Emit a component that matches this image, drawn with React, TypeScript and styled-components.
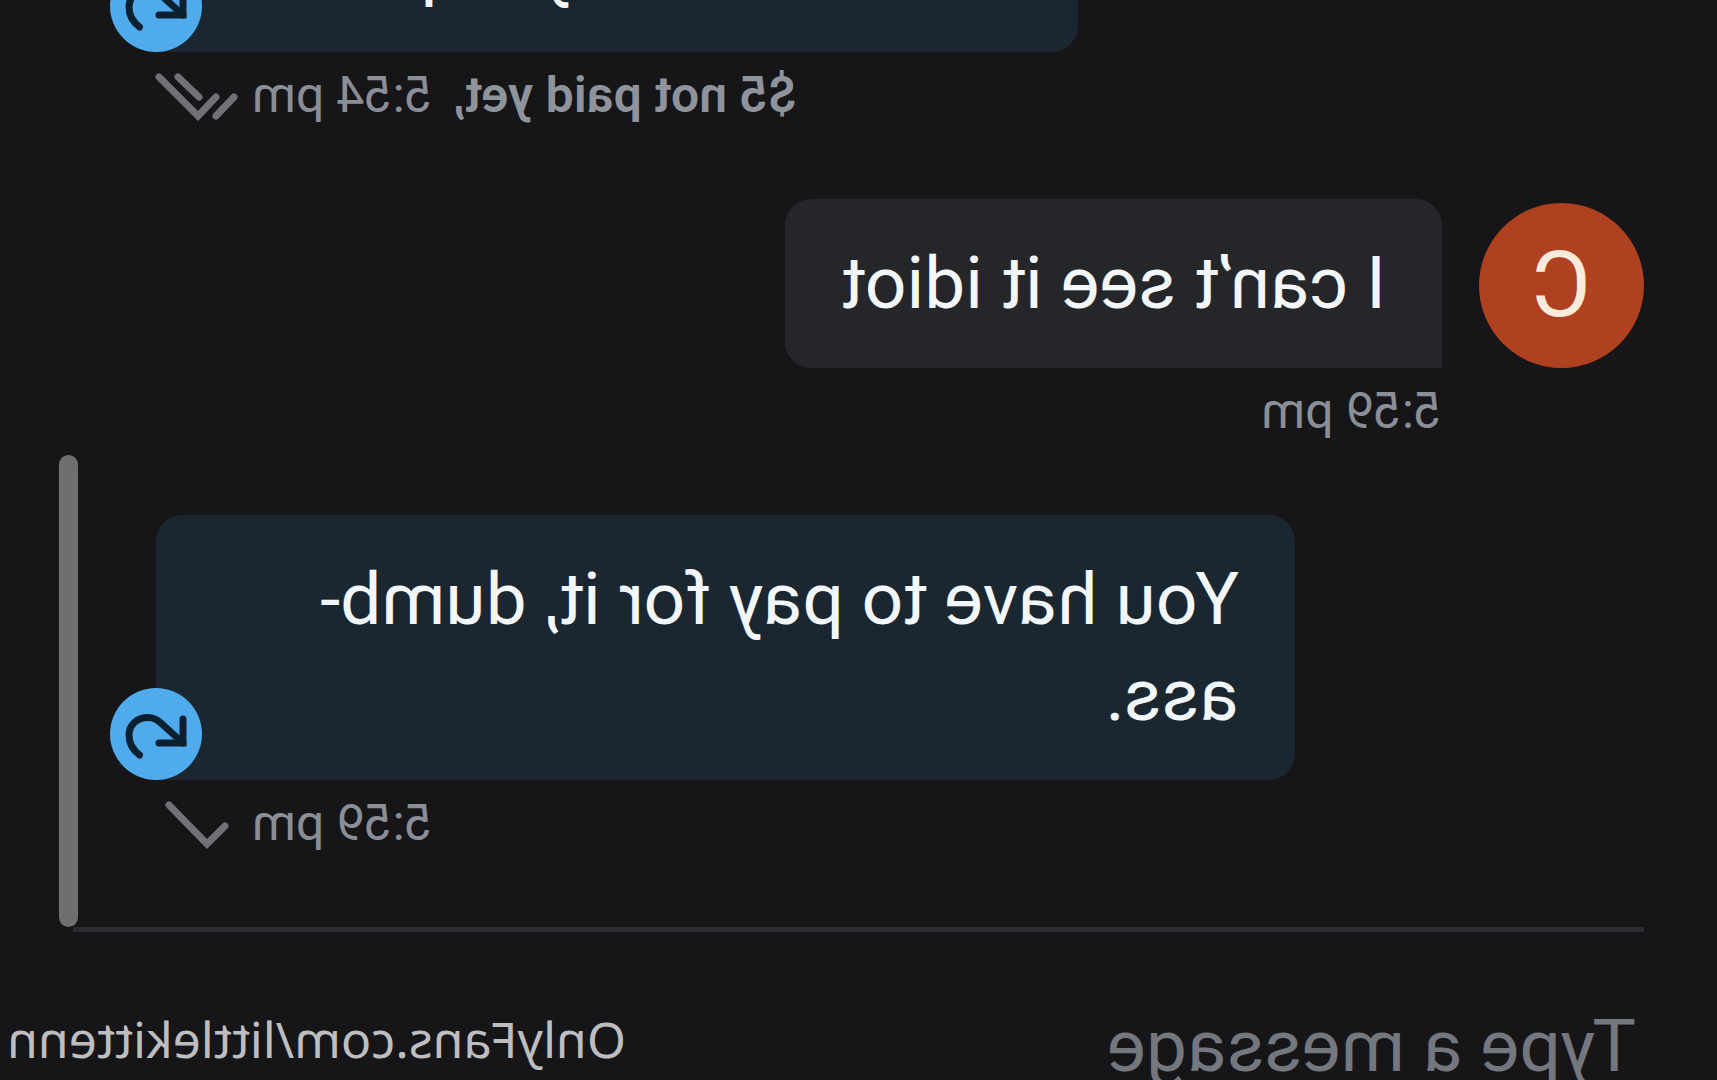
import React from "react";
import styled, { createGlobalStyle } from "styled-components";

const GlobalStyle = createGlobalStyle`
  * { box-sizing: border-box; }
  body { margin: 0; background: #161618; }
`;

/* The whole conversation is shown flipped left to right. */
const Page = styled.main`
  display: flex;
  flex-direction: column;
  height: 100vh;
  overflow: hidden;
  background: #161618;
  color: #f3f6fb;
  font-family: Roboto, "Liberation Sans", sans-serif;
  transform: scaleX(-1);
`;

const Thread = styled.section`
  position: relative;
  flex: 1 1 0;
  min-height: 0;
  display: flex;
  flex-direction: column;
  justify-content: flex-end;
  gap: 69px;
  padding: 0 156px 69px 73px;
`;

const ScrollThumb = styled.div`
  position: absolute;
  right: 59px;
  bottom: 0;
  width: 19px;
  height: 472px;
  border-radius: 10px;
  background: #6f6f6f;
`;

const Message = styled.article<{ $sent?: boolean }>`
  display: flex;
  flex: none;
  flex-direction: column;
  align-items: ${(p) => (p.$sent ? "flex-end" : "flex-start")};
  gap: 8px;
`;

const BubbleRow = styled.div`
  display: flex;
  align-items: flex-end;
  gap: 37px;
`;

const Avatar = styled.div`
  display: grid;
  place-items: center;
  width: 165px;
  height: 165px;
  border-radius: 50%;
  background: #b04120;
  color: #fdeadb;
  font-size: 90px;
`;

const Bubble = styled.div<{ $sent?: boolean }>`
  position: relative;
  max-width: 1139px;
  padding: 36px 56px 37px;
  border-radius: ${(p) => (p.$sent ? "26px 26px 0 26px" : "26px 26px 26px 0")};
  background: ${(p) => (p.$sent ? "#1a2730" : "#25262a")};
`;

const Text = styled.p`
  margin: 0;
  font-size: 73px;
  line-height: 96px;
`;

const Badge = styled.button`
  position: absolute;
  right: -46px;
  bottom: 0;
  width: 92px;
  height: 92px;
  padding: 0;
  border: 0;
  border-radius: 50%;
  background: #4fabeb;
  color: #0b2030;
`;

const Meta = styled.footer<{ $inset?: boolean }>`
  display: flex;
  align-items: center;
  gap: 16px;
  padding-left: ${(p) => (p.$inset ? "202px" : "0")};
  color: #8b8e96;
  font-size: 50px;
  line-height: 70px;
`;

const Unpaid = styled.strong`
  margin-right: 8px;
  font-weight: 600;
  color: #8f939c;
`;

const Icon = styled.svg`
  display: block;
  fill: none;
  stroke: currentColor;
  stroke-width: 7;
  stroke-linecap: round;
  overflow: visible;
`;

const TickIcon = styled(Icon)`
  color: #707278;
`;

const Composer = styled.form`
  position: relative;
  flex: 0 0 153px;
  min-height: 0;
  margin: 0 73px;
  padding: 66px 8px 0;
  border-top: 5px solid #2c2c31;
`;

const MessageInput = styled.input`
  display: block;
  width: 100%;
  height: 96px;
  padding: 0;
  border: 0;
  outline: 0;
  background: transparent;
  color: #f3f6fb;
  font: 73px/96px Roboto, "Liberation Sans", sans-serif;
  &::placeholder { color: #74777e; opacity: 1; }
`;

const ProfileLink = styled.a`
  position: absolute;
  right: -66px;
  bottom: 6px;
  color: #bebec0;
  font: 50px/70px "Noto Sans", "Open Sans", sans-serif;
  text-decoration: none;
`;

function ResendIcon() {
  return (
    <Icon width="92" height="92" viewBox="0 0 92 92" aria-hidden="true">
      <path d="M62.5 67C69 62 73 55 73 47C73 37 65 29.5 54 29.5C48 29.5 44 32 40 36L19 55" />
      <path d="M19 31V55H43" />
    </Icon>
  );
}

function Ticks({ read }: { read?: boolean }) {
  return (
    <TickIcon width="80" height="48" viewBox="0 0 80 48" aria-hidden="true">
      {read ? (
        <>
          <path d="M77 6L38 45L20 26" />
          <path d="M58 6L37 26M2 26L20 45" />
        </>
      ) : (
        <path d="M67 6L29 45L11 27" />
      )}
    </TickIcon>
  );
}

interface SentProps {
  text: string;
  time: string;
  unpaid?: string;
  read?: boolean;
}

function SentMessage({ text, time, unpaid, read }: SentProps) {
  return (
    <Message $sent>
      <Bubble $sent>
        <Text>{text}</Text>
        <Badge type="button" aria-label="Resend">
          <ResendIcon />
        </Badge>
      </Bubble>
      <Meta>
        <span>
          {unpaid && <Unpaid>{unpaid}</Unpaid>} {time}
        </span>
        <Ticks read={read} />
      </Meta>
    </Message>
  );
}

export default function App() {
  return (
    <>
      <GlobalStyle />
      <Page>
        <Thread>
          <SentMessage text="I have sent to you photos" unpaid="$5 not paid yet," time="5:54 pm" read />
          <Message>
            <BubbleRow>
              <Avatar>C</Avatar>
              <Bubble>
                <Text>I can’t see it idiot</Text>
              </Bubble>
            </BubbleRow>
            <Meta $inset>5:59 pm</Meta>
          </Message>
          <SentMessage text="You have to pay for it, dumb-ass." time="5:59 pm" />
          <ScrollThumb />
        </Thread>
        <Composer>
          <MessageInput type="text" aria-label="Message" placeholder="Type a message" />
          <ProfileLink href="#profile">OnlyFans.com/littlekittenn</ProfileLink>
        </Composer>
      </Page>
    </>
  );
}
